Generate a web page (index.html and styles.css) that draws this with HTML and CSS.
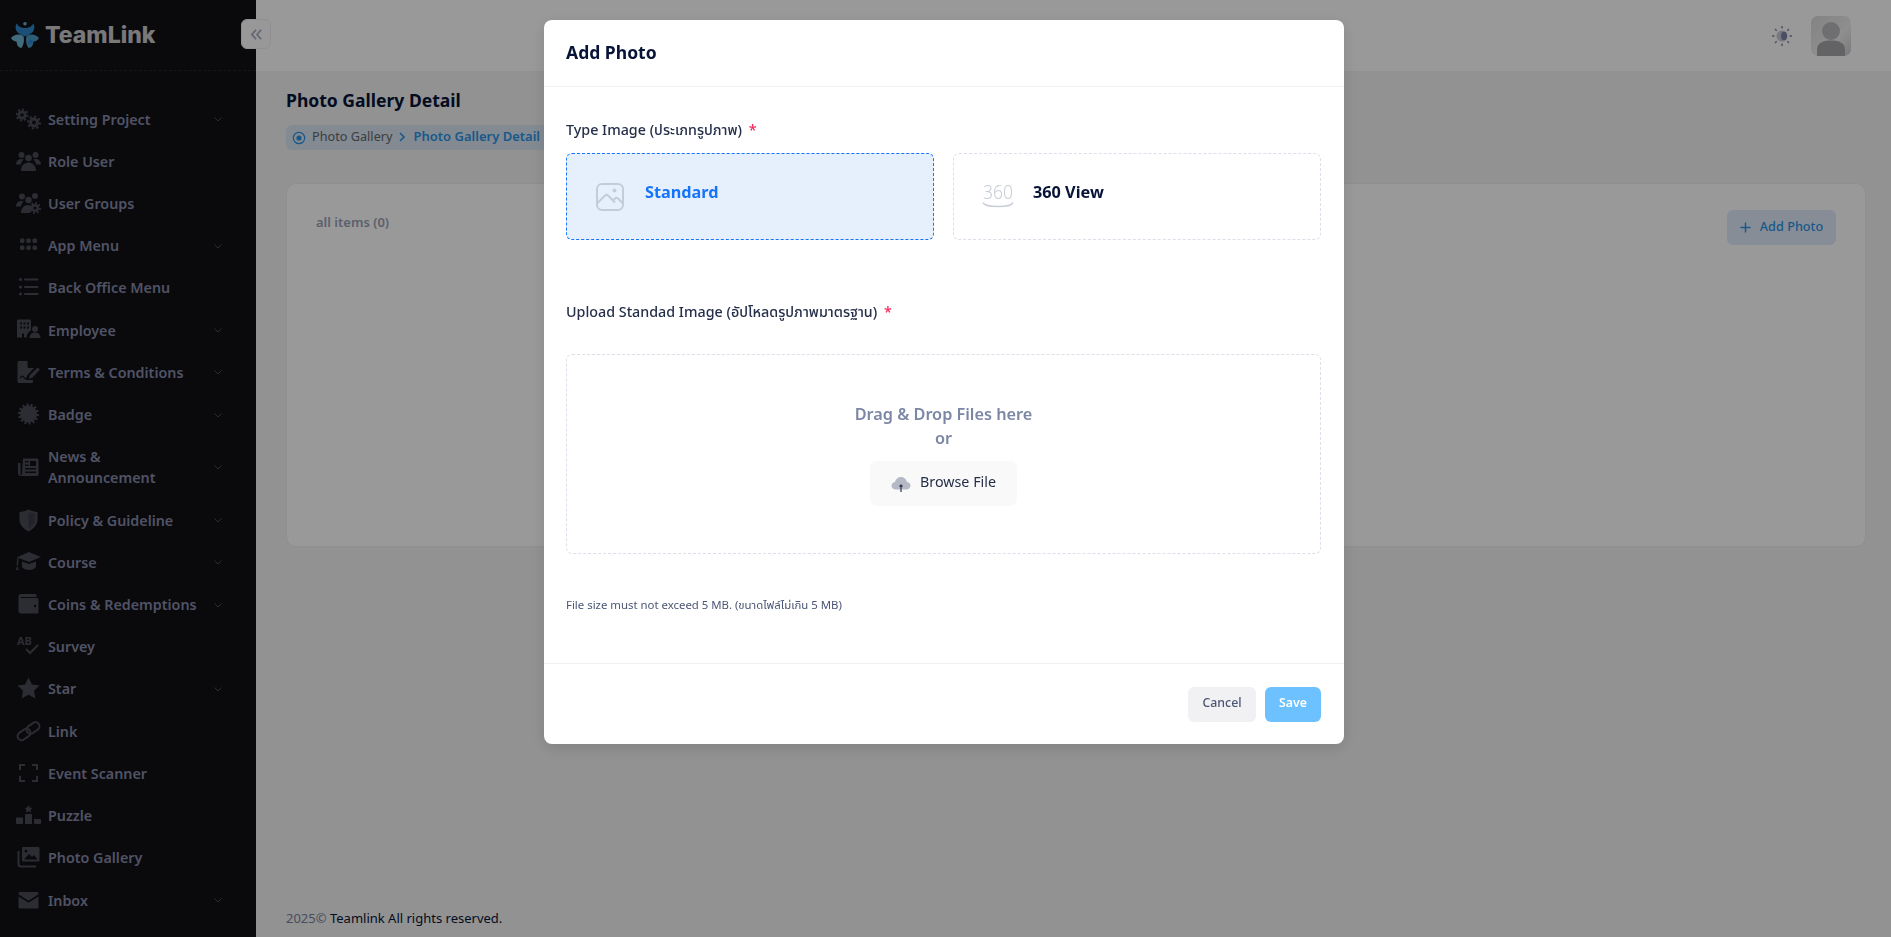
FILE: index.html
```html
<!DOCTYPE html>
<html lang="en">
<head>
    <meta charset="UTF-8">
    <meta name="viewport" content="width=device-width, initial-scale=1.0">
    <title>Photo Gallery Detail</title>
    <link rel="stylesheet" href="styles.css">
</head>
<body>
    <div class="layout">
        <aside class="sidebar">
            <div class="brand">
                <svg class="brand-mark" viewBox="0 0 28 26">
                    <circle cx="14" cy="1.800" r="1.800" fill="#5fb0d8"/>
                    <path d="M5.500 1.500c2 3 4.500 4.500 8.500 4.500s6.500-1.500 8.500-4.500c2 4.500.5 8.500-3.500 10.500L14 14.500 9 12C5 10 3.500 6 5.500 1.500z" fill="#2e86c8"/>
                    <path d="M0 16c3-3.500 8-4.500 12.500-2 1 4 .5 8.500-2 12-3.500-.5-4.500-3-5-6.500C3 19.500 1.200 18 0 16z" fill="#6fb3d2"/>
                    <path d="M28 16c-3-3.500-8-4.500-12.500-2-1 4-.5 8.500 2 12 3.500-.5 4.500-3 5-6.500 2.500 0 4.300-1.500 5.500-3.500z" fill="#4a9cc4"/>
                    <circle cx="19.500" cy="20" r="2.400" fill="#2e86d8"/>
                </svg>
                <span class="brand-name">TeamLink</span>
            </div>
            <nav class="menu">
                <a class="menu-item">
                    <svg class="menu-icon" viewBox="0 0 25 25">
                        <circle cx="6" cy="8" r="4.600"/><circle cx="6" cy="8" r="5.500" class="teeth" pathLength="16"/><circle cx="6" cy="8" r="1.800" class="hole"/>
                        <circle cx="18" cy="15.500" r="5"/><circle cx="18" cy="15.500" r="6" class="teeth" pathLength="16"/><circle cx="18" cy="15.500" r="2" class="hole"/>
                    </svg>
                    <span class="menu-label">Setting Project</span>
                    <svg class="chevron" viewBox="0 0 12 12"><path d="M2.500 4.500 6 8l3.500-3.500"/></svg>
                </a>
                <a class="menu-item">
                    <svg class="menu-icon" viewBox="0 0 25 25">
                        <g transform="translate(0 2.500)">
                            <circle cx="5.500" cy="3.500" r="3"/><circle cx="19.500" cy="3.500" r="3"/><circle cx="12.500" cy="6.500" r="3.300"/>
                            <path d="M0 13c0-3.500 2.500-5.500 5.500-5.500 1 0 1.700.2 2.300.5C6.300 9.200 5 11 5 13zM25 13c0-3.500-2.500-5.500-5.500-5.500-1 0-1.700.2-2.300.5 1.500 1.200 2.800 3 2.800 5z"/>
                            <path d="M5 19.500c0-5 3-8.500 7.500-8.500s7.500 3.500 7.500 8.500z"/>
                        </g>
                    </svg>
                    <span class="menu-label">Role User</span>
                </a>
                <a class="menu-item">
                    <svg class="menu-icon" viewBox="0 0 25 25">
                        <g transform="translate(0 2.500)">
                            <circle cx="6" cy="3" r="3"/><circle cx="19" cy="2.500" r="3"/><circle cx="12.500" cy="6.500" r="3.200"/>
                            <path d="M0 13c0-3.500 2.500-5.500 5.500-5.500 1 0 1.700.2 2.300.5C6.300 9.200 5 11 5 13z"/>
                            <path d="M5 19.500c0-5 3-8 7-8 2 0 3.500.8 4.500 2l-2.500 6z"/>
                            <circle cx="19" cy="14.500" r="4"/><circle cx="19" cy="14.500" r="5" class="teeth" pathLength="16"/><circle cx="19" cy="14.500" r="1.600" class="hole"/>
                        </g>
                    </svg>
                    <span class="menu-label">User Groups</span>
                </a>
                <a class="menu-item">
                    <svg class="menu-icon" viewBox="0 0 25 25">
                        <rect x="4" y="5.500" width="4.500" height="4.500" rx="1.400"/><rect x="10.300" y="5.500" width="4.500" height="4.500" rx="1.400"/><rect x="16.500" y="5.500" width="4.500" height="4.500" rx="1.400"/>
                        <rect x="4" y="12.500" width="4.500" height="4.500" rx="1.400"/><rect x="10.300" y="12.500" width="4.500" height="4.500" rx="1.400"/><rect x="16.500" y="12.500" width="4.500" height="4.500" rx="1.400"/>
                    </svg>
                    <span class="menu-label">App Menu</span>
                    <svg class="chevron" viewBox="0 0 12 12"><path d="M2.500 4.500 6 8l3.500-3.500"/></svg>
                </a>
                <a class="menu-item">
                    <svg class="menu-icon" viewBox="0 0 25 25">
                        <circle cx="4.500" cy="4.500" r="1.600"/><circle cx="4.500" cy="12" r="1.600"/><circle cx="4.500" cy="19" r="1.600"/>
                        <rect x="8" y="3.500" width="14.500" height="2" rx="1"/><rect x="8" y="11" width="14.500" height="2" rx="1"/><rect x="8" y="18" width="14.500" height="2" rx="1"/>
                    </svg>
                    <span class="menu-label">Back Office Menu</span>
                </a>
                <a class="menu-item">
                    <svg class="menu-icon" viewBox="0 0 25 25">
                        <path d="M1 3C1 2 1.500 1.500 2.500 1.500h11c1 0 1.500.5 1.500 1.500v9.500c-2.500 1-4 3-4.500 7H8v-4H6v4H1z"/>
                        <g class="hole-group"><rect x="4" y="4.500" width="2" height="2"/><rect x="7.500" y="4.500" width="2" height="2"/><rect x="11" y="4.500" width="2" height="2"/><rect x="4" y="8.500" width="2" height="2"/><rect x="7.500" y="8.500" width="2" height="2"/><rect x="11" y="8.500" width="2" height="2"/></g>
                        <circle cx="19" cy="11" r="3"/><path d="M13.500 20c0-3.500 2.500-5.500 5.500-5.500s5.500 2 5.500 5.500z"/>
                    </svg>
                    <span class="menu-label">Employee</span>
                    <svg class="chevron" viewBox="0 0 12 12"><path d="M2.500 4.500 6 8l3.500-3.500"/></svg>
                </a>
                <a class="menu-item">
                    <svg class="menu-icon" viewBox="0 0 25 25">
                        <path d="M3 1h8.500v5.500c0 1 .5 1.500 1.500 1.500h5l-6.500 7-1.500 5h7v1.500c0 1-.5 1.500-1.500 1.500H3c-1 0-1.500-.5-1.500-1.500v-19C1.500 1.500 2 1 3 1z"/>
                        <path d="M14 15 21.500 7.500l2.500 2-7.500 8-3.500 1.500z"/>
                        <path d="M4 18.500c2-3 3-3 4-1s2 1 3.500-.5" class="line"/>
                    </svg>
                    <span class="menu-label">Terms &amp; Conditions</span>
                    <svg class="chevron" viewBox="0 0 12 12"><path d="M2.500 4.500 6 8l3.500-3.500"/></svg>
                </a>
                <a class="menu-item">
                    <svg class="menu-icon" viewBox="0 0 25 25">
                        <circle cx="12.500" cy="12" r="8.500"/><circle cx="12.500" cy="12" r="9" class="teeth wide" pathLength="28"/>
                    </svg>
                    <span class="menu-label">Badge</span>
                    <svg class="chevron" viewBox="0 0 12 12"><path d="M2.500 4.500 6 8l3.500-3.500"/></svg>
                </a>
                <a class="menu-item">
                    <svg class="menu-icon" viewBox="0 0 25 25">
                        <path d="M7 3.500h13.500c1.500 0 2 .5 2 2v14c0 1-.7 1.500-1.500 1.500H5c-2 0-3-1-3-3V8h2.500v11c0 .5.300 1 .8 1s.7-.5.700-1z"/>
                        <g class="hole-group"><rect x="14" y="6" width="6" height="5"/><rect x="9" y="6" width="3.500" height="1.500"/><rect x="9" y="9.500" width="3.500" height="1.500"/><rect x="9" y="13" width="11" height="1.500"/><rect x="9" y="16.500" width="11" height="1.500"/></g>
                    </svg>
                    <span class="menu-label">News &amp; Announcement</span>
                    <svg class="chevron" viewBox="0 0 12 12"><path d="M2.500 4.500 6 8l3.500-3.500"/></svg>
                </a>
                <a class="menu-item">
                    <svg class="menu-icon" viewBox="0 0 25 25">
                        <path d="M12.500 1.500c3 1.500 6 2.300 9 2.500v7.500c0 5-4 9.500-9 12-5-2.500-9-7-9-12V4c3-.2 6-1 9-2.500z"/>
                        <path d="M12.500 4c2.200 1 4.500 1.700 6.500 2v5.500c0 3.500-2.700 7-6.500 9.200z" class="shade"/>
                    </svg>
                    <span class="menu-label">Policy &amp; Guideline</span>
                    <svg class="chevron" viewBox="0 0 12 12"><path d="M2.500 4.500 6 8l3.500-3.500"/></svg>
                </a>
                <a class="menu-item">
                    <svg class="menu-icon" viewBox="0 0 25 25">
                        <path d="M13 2 25 7l-12 5L2.500 8 2 15H.5L1.500 7z"/>
                        <path d="M6 11.500 13 14l7-2.500v5.500c-1.500 2-4 3-7 3s-5.500-1-7-3z"/>
                        <path d="M0 20l1.300-5 1.200 5z"/>
                    </svg>
                    <span class="menu-label">Course</span>
                    <svg class="chevron" viewBox="0 0 12 12"><path d="M2.500 4.500 6 8l3.500-3.500"/></svg>
                </a>
                <a class="menu-item">
                    <svg class="menu-icon" viewBox="0 0 25 25">
                        <path d="M5 2h14c1 0 1.500.5 1.500 1.500V5H5c-.7 0-.7 1 0 1h16c1 0 1.500.5 1.500 1.500V20c0 1-.5 1.500-1.500 1.500H5c-1.500 0-2.500-1-2.500-2.500V4.500C2.500 3 3.500 2 5 2z"/>
                        <circle cx="19" cy="14" r="1.200" class="hole"/>
                    </svg>
                    <span class="menu-label">Coins &amp; Redemptions</span>
                    <svg class="chevron" viewBox="0 0 12 12"><path d="M2.500 4.500 6 8l3.500-3.500"/></svg>
                </a>
                <a class="menu-item">
                    <svg class="menu-icon" viewBox="0 0 25 25">
                        <text x="1" y="11" class="icon-text">AB</text>
                        <path d="M10 15l4 4 8-8" class="line thick"/>
                    </svg>
                    <span class="menu-label">Survey</span>
                </a>
                <a class="menu-item">
                    <svg class="menu-icon" viewBox="0 0 25 25">
                        <path d="m12.500 1.500 3.400 7 7.600 1-5.500 5.300 1.400 7.700-6.900-3.700-6.900 3.700 1.400-7.700L1.500 9.500l7.600-1z"/>
                    </svg>
                    <span class="menu-label">Star</span>
                    <svg class="chevron" viewBox="0 0 12 12"><path d="M2.500 4.500 6 8l3.500-3.500"/></svg>
                </a>
                <a class="menu-item">
                    <svg class="menu-icon" viewBox="0 0 25 25">
                        <g class="line thick">
                            <rect x="1" y="11.500" width="14" height="8" rx="4" transform="rotate(-35 8 15.500)"/>
                            <rect x="10" y="5" width="14" height="8" rx="4" transform="rotate(-35 17 9)"/>
                        </g>
                    </svg>
                    <span class="menu-label">Link</span>
                </a>
                <a class="menu-item">
                    <svg class="menu-icon" viewBox="0 0 25 25">
                        <path d="M9 4H4v5M16 4h5v5M9 20H4v-5M16 20h5v-5" class="line thick"/>
                    </svg>
                    <span class="menu-label">Event Scanner</span>
                </a>
                <a class="menu-item">
                    <svg class="menu-icon" viewBox="0 0 25 25">
                        <path d="m12.500 2 1.300 2.500 2.700.4-2 1.900.5 2.700-2.500-1.300L10 9.500l.5-2.700-2-1.900 2.700-.4z"/>
                        <rect x="0" y="14.500" width="7" height="6.500" rx=".8"/><rect x="9" y="11" width="7" height="10" rx=".8"/><rect x="18" y="16" width="7" height="5" rx=".8"/>
                    </svg>
                    <span class="menu-label">Puzzle</span>
                </a>
                <a class="menu-item">
                    <svg class="menu-icon" viewBox="0 0 25 25">
                        <path d="M7.500 2H22c1 0 1.500.5 1.500 1.500V15c0 1-.5 1.500-1.500 1.500H7.500C6.500 16.500 6 16 6 15V3.500C6 2.500 6.500 2 7.500 2z"/>
                        <path d="M8 14.500 13 9l3 3 2-2 3.500 4.500z" class="shade-dark"/>
                        <circle cx="10" cy="6" r="1.500" class="hole"/>
                        <path d="M2.500 6v13c0 1.500 1 2.500 2.500 2.500h15" class="line thick"/>
                    </svg>
                    <span class="menu-label">Photo Gallery</span>
                </a>
                <a class="menu-item">
                    <svg class="menu-icon" viewBox="0 0 25 25">
                        <path d="M4 4h17c1 0 1.500.5 1.500 1.500v.8l-10 6.400-10-6.400v-.8C2.500 4.500 3 4 4 4z"/>
                        <path d="M2.500 8.500l10 6.300 10-6.300V19c0 1-.5 1.500-1.500 1.500H4c-1 0-1.500-.5-1.500-1.500z"/>
                    </svg>
                    <span class="menu-label">Inbox</span>
                    <svg class="chevron" viewBox="0 0 12 12"><path d="M2.500 4.500 6 8l3.500-3.500"/></svg>
                </a>
            </nav>
        </aside>

        <div class="main">
            <header class="topbar">
                <svg class="theme-icon" viewBox="0 0 20 20">
                    <circle cx="10" cy="10" r="5.500" fill="#c9cad2"/>
                    <ellipse cx="12" cy="10" rx="3" ry="4.300" fill="#7b84a8"/>
                    <path d="M10 0v2.500M10 17.500V20M0 10h2.500M17.500 10H20M3 3l1.700 1.700M15.300 15.300 17 17M3 17l1.700-1.700M15.300 4.700 17 3" stroke="#8288a6" stroke-width="1.500"/>
                </svg>
                <div class="avatar">
                    <svg viewBox="0 0 40 40">
                        <circle cx="20" cy="15" r="9" fill="#b9b9be"/>
                        <path d="M6 40v-6c0-7 5-9.500 14-9.500S34 27 34 34v6z" fill="#a5a5ab"/>
                    </svg>
                </div>
            </header>

            <main class="content">
                <h1 class="page-title">Photo Gallery Detail</h1>
                <div class="breadcrumb">
                    <svg class="crumb-icon" viewBox="0 0 14 14">
                        <circle cx="7" cy="7" r="5.700" fill="none" stroke="#2b93e6" stroke-width="1.200"/>
                        <circle cx="7" cy="7" r="2.600" fill="#2b93e6"/>
                    </svg>
                    <span class="crumb">Photo Gallery</span>
                    <svg class="crumb-sep" viewBox="0 0 10 12"><path d="m3 2 4 4-4 4"/></svg>
                    <span class="crumb current">Photo Gallery Detail</span>
                </div>
                <section class="card">
                    <span class="count">all items (0)</span>
                    <button class="add-btn">
                        <svg viewBox="0 0 12 12"><path d="M6 .5v11M.5 6h11"/></svg>
                        <span class="add-text">Add Photo</span>
                    </button>
                </section>
            </main>

            <footer class="page-footer"><span class="year">2025©</span> Teamlink All rights reserved.</footer>
        </div>

        <button class="collapse-btn">
            <svg viewBox="0 0 14 14"><path d="M6.500 2 2 7l4.500 5M12 2 7.500 7l4.500 5"/></svg>
        </button>
    </div>

    <!-- The Modal -->
    <div class="backdrop"></div>
    <div class="modal">
        <div class="modal-header">Add Photo</div>
        <div class="modal-body">
            <label class="field-label">Type Image (ประเภทรูปภาพ) <span class="req">*</span></label>
            <div class="type-row">
                <div class="type-card active">
                    <svg class="type-icon" viewBox="0 0 28 28">
                        <rect x="1" y="1" width="26" height="26" rx="5" fill="none" stroke="#c3ccd9" stroke-width="2"/>
                        <path d="M1.500 20 9 12.500c1-1 2-1 3 0l7 7M17 17.500l2-2c1-1 2-1 3 0l4.500 4.500" fill="none" stroke="#c3ccd9" stroke-width="2"/>
                        <circle cx="18.500" cy="7.500" r="2" fill="#c3ccd9"/>
                    </svg>
                    <span class="type-name">Standard</span>
                </div>
                <div class="type-card">
                    <svg class="type-icon wide" viewBox="0 0 32 26">
                        <text x="1" y="15" class="deg-text" textLength="30" lengthAdjust="spacingAndGlyphs">360</text>
                        <path d="M1 18.500c1 3 7 4 15 4s14-1 15-4" fill="none" stroke="#c9ced6" stroke-width="1.600"/>
                    </svg>
                    <span class="type-name">360 View</span>
                </div>
            </div>

            <label class="field-label upload-label">Upload Standad Image (อัปโหลดรูปภาพมาตรฐาน) <span class="req">*</span></label>
            <div class="dropzone">
                <div class="drop-text">Drag &amp; Drop Files here</div>
                <div class="drop-text">or</div>
                <button class="browse-btn">
                    <svg viewBox="0 0 20 16">
                        <path d="M5 13.500c-2.500 0-4.500-1.500-4.500-3.800 0-2 1.500-3.500 3.500-3.700C4.700 3 7 1 10 1s5.300 2 6 5c2 .2 3.500 1.700 3.500 3.700 0 2.300-2 3.800-4.500 3.800z" fill="#b5b9c6"/>
                        <path d="M10 16V9M8.500 10.500 10 9l1.500 1.500" fill="none" stroke="#2d3250" stroke-width="1.200"/>
                    </svg>
                    <span class="browse-text">Browse File</span>
                </button>
            </div>
            <p class="hint">File size must not exceed 5 MB. (ขนาดไฟล์ไม่เกิน 5 MB)</p>
        </div>
        <div class="modal-footer">
            <button class="btn btn-cancel">Cancel</button>
            <button class="btn btn-save">Save</button>
        </div>
    </div>
</body>
</html>
```

FILE: styles.css
```css
* {
    box-sizing: border-box;
}
html, body {
    height: 100%;
}
body {
    margin: 0;
    font-family: "Noto Sans", "Noto Sans Thai", sans-serif;
    background: #f3f3f3;
    color: #071437;
    overflow: hidden;
}
button {
    font-family: inherit;
    border: 0;
}

/* page under the modal */
.layout {
    display: flex;
    height: 100vh;
}
.sidebar {
    width: 256px;
    flex: none;
    background: #111116;
}
.brand {
    height: 71px;
    display: flex;
    align-items: center;
    padding: 0 0 0 11px;
    gap: 6px;
    border-bottom: 1px dashed #24242c;
}
.brand-mark {
    width: 28px;
    height: 26px;
}
.brand-name {
    font-family: Inter, sans-serif;
    font-weight: 800;
    font-size: 23px;
    color: #fff;
    opacity: 0.78;
}
.menu {
    padding-top: 27px;
}
.menu-item {
    display: flex;
    align-items: center;
    padding: 10.62px 0 10.62px 16px;
    line-height: 21px;
    font-size: 14.3px;
    font-weight: 600;
    color: #868aa8;
}
.menu-icon {
    width: 25px;
    height: 25px;
    margin: -2px 7px -2px 0;
    flex: none;
    fill: #494b56;
}
.menu-label {
    flex: none;
    width: 155px;
}
.chevron {
    width: 12px;
    height: 12px;
    margin-left: 9px;
    fill: none;
    stroke: #494b56;
    stroke-width: 1;
}
.teeth {
    fill: none;
    stroke: #494b56;
    stroke-width: 2;
    stroke-dasharray: 1 1;
}
.teeth.wide {
    stroke-width: 3;
}
.hole,
.hole-group rect {
    fill: #111116;
}
.shade {
    fill: #3a3c46;
}
.shade-dark {
    fill: #111116;
}
.line {
    fill: none;
    stroke: #111116;
    stroke-width: 1.200;
}
.line.thick,
.line.thick rect {
    fill: none;
    stroke: #494b56;
    stroke-width: 2;
}
.icon-text {
    font-size: 11px;
    font-weight: 700;
    fill: #494b56;
}
.main {
    flex: 1;
    min-width: 0;
    display: flex;
    flex-direction: column;
}
.topbar {
    height: 71px;
    flex: none;
    background: #fff;
    display: flex;
    align-items: center;
    justify-content: flex-end;
    padding-right: 40px;
}
.theme-icon {
    width: 20px;
    height: 20px;
    margin-right: 19px;
}
.avatar {
    width: 40px;
    height: 40px;
    border-radius: 7px;
    overflow: hidden;
    background: linear-gradient(135deg, #d9dadb, #eeeeee 60%, #c9cbcd);
}
.avatar svg {
    display: block;
}
.content {
    flex: 1;
    padding: 17px 25px 0 30px;
}
.page-title {
    margin: 0;
    font-size: 17.55px;
    line-height: 25px;
    font-weight: 700;
    color: #071437;
}
.breadcrumb {
    display: inline-flex;
    align-items: center;
    height: 25px;
    margin-top: 12px;
    padding: 0 10px 3px 6px;
    background: #dbe7f4;
    border-radius: 6px;
    font-size: 13px;
}
.crumb-icon {
    width: 14px;
    height: 14px;
    margin: 3px 6px 0 0;
}
.crumb {
    font-size: 12.7px;
    color: #666;
    margin-top: -1px;
}
.crumb.current {
    font-size: 13px;
    color: #2b93e6;
    font-weight: 600;
    margin-top: 0;
}
.crumb-sep {
    width: 10px;
    height: 12px;
    margin: 2px 7px 0 4px;
    fill: none;
    stroke: #2b93e6;
    stroke-width: 1.600;
}
.card {
    margin-top: 33px;
    height: 364px;
    background: #fff;
    border: 1px solid #eceef2;
    border-radius: 10px;
    padding: 26px 29px 0;
    display: flex;
    justify-content: space-between;
    align-items: flex-start;
}
.count {
    font-size: 13px;
    font-weight: 600;
    color: #99a1b7;
    line-height: 25px;
}
.add-btn {
    width: 109px;
    height: 35px;
    background: #e1ecfa;
    color: #2b93e6;
    border-radius: 6px;
    font-size: 12.7px;
    font-weight: 500;
    display: flex;
    align-items: center;
    justify-content: center;
    gap: 9px;
}
.add-btn svg {
    width: 11px;
    height: 11px;
    fill: none;
    stroke: #2b93e6;
    stroke-width: 1.600;
}
.add-text {
    margin-top: -3px;
}
.page-footer {
    flex: none;
    height: 38px;
    padding-left: 30px;
    font-size: 13px;
    line-height: 38px;
    color: #071437;
}
.page-footer .year {
    color: #78829d;
}
.collapse-btn {
    position: absolute;
    left: 241px;
    top: 19px;
    width: 30px;
    height: 30px;
    padding: 0;
    background: #fdfdfd;
    border: 1px solid #f1f1f4;
    border-radius: 6px;
    display: flex;
    align-items: center;
    justify-content: center;
}
.collapse-btn svg {
    width: 13px;
    height: 13px;
    fill: none;
    stroke: #a4a9c0;
    stroke-width: 1.800;
}

/* modal */
.backdrop {
    position: fixed;
    inset: 0;
    background: rgba(0,0,0,0.4);
}
.modal {
    position: fixed;
    left: 544px;
    top: 20px;
    width: 800px;
    height: 724px;
    background: #fff;
    border-radius: 8px;
    box-shadow: 0 4px 16px rgba(0,0,0,0.12);
    display: flex;
    flex-direction: column;
}
.modal-header {
    height: 67px;
    flex: none;
    padding: 0 22px;
    border-bottom: 1px solid #f1f1f4;
    font-size: 17.55px;
    font-weight: 700;
    line-height: 65px;
    color: #071437;
}
.modal-body {
    flex: 1;
    padding: 0 23px 0 22px;
}
.field-label {
    display: block;
    margin-top: 31px;
    font-size: 14.3px;
    font-weight: 500;
    line-height: 24px;
    color: #252f4a;
}
.req {
    color: #f8285a;
    margin-left: 3px;
}
.type-row {
    display: flex;
    gap: 19px;
    margin-top: 11px;
}
.type-card {
    flex: 1;
    height: 87px;
    display: flex;
    align-items: center;
    gap: 19px;
    padding-left: 28px;
    border: 1px dashed #dbdfe9;
    border-radius: 6px;
}
.type-card.active {
    gap: 20px;
    background: #e6f0fd;
    border-color: #1673fb;
}
.type-card.active .type-name {
    color: #1673fb;
}
.type-icon {
    width: 30px;
    height: 28px;
    flex: none;
}
.type-icon.wide {
    width: 32px;
    height: 26px;
    overflow: visible;
}
.type-name {
    font-size: 16.25px;
    font-weight: 700;
    color: #071437;
    margin-top: -10px;
}
.deg-text {
    font-size: 20px;
    font-weight: 300;
    fill: #c9ced6;
}
.upload-label {
    margin-top: 60px;
}
.dropzone {
    margin-top: 30px;
    height: 200px;
    border: 1px dashed #dbdfe9;
    border-radius: 6px;
    display: flex;
    flex-direction: column;
    align-items: center;
    padding-top: 47px;
}
.drop-text {
    font-size: 16.25px;
    font-weight: 600;
    line-height: 24px;
    color: #7c87a6;
}
.browse-btn {
    width: 147px;
    height: 45px;
    margin-top: 11px;
    background: #f9f9f9;
    border-radius: 7px;
    color: #252f4a;
    font-size: 14.3px;
    font-weight: 400;
    display: flex;
    align-items: center;
    justify-content: center;
    gap: 9px;
}
.browse-btn svg {
    width: 20px;
    height: 16px;
}
.browse-text {
    margin-top: -5px;
}
.hint {
    margin: 42px 0 0;
    font-size: 11.4px;
    line-height: 18px;
    color: #4b5675;
}
.modal-footer {
    height: 81px;
    flex: none;
    border-top: 1px solid #f1f1f4;
    display: flex;
    justify-content: flex-end;
    align-items: flex-start;
    gap: 9px;
    padding: 23px 23px 0 0;
}
.btn {
    height: 35px;
    padding: 0 0 5px;
    border-radius: 6px;
    font-size: 12.35px;
    font-weight: 500;
}
.btn-cancel {
    width: 68px;
    background: #f1f1f4;
    color: #4b5675;
}
.btn-save {
    width: 56px;
    background: #6ec1ff;
    color: #fff;
    font-weight: 600;
}
```
